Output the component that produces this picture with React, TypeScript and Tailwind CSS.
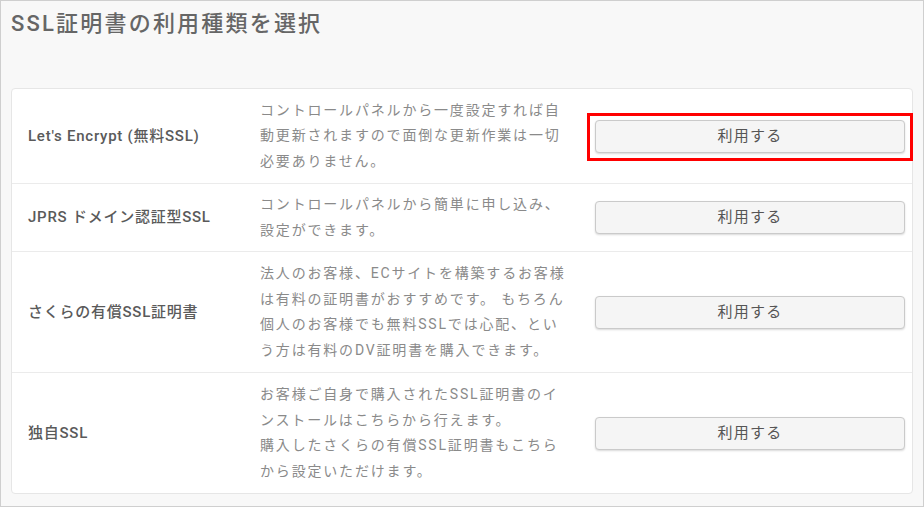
const font = { fontFamily: 'Roboto, "Noto Sans CJK JP", sans-serif' };

const rows = [
  {
    label: "Let's Encrypt (無料SSL)",
    lines: ['コントロールパネルから一度設定すれば自', '動更新されますので面倒な更新作業は一切', '必要ありません。'],
    height: 'h-[94px]',
    marked: true,
  },
  {
    label: 'JPRS ドメイン認証型SSL',
    lines: ['コントロールパネルから簡単に申し込み、', '設定ができます。'],
    height: 'h-[68px]',
  },
  {
    label: 'さくらの有償SSL証明書',
    lines: ['法人のお客様、ECサイトを構築するお客様', 'は有料の証明書がおすすめです。 もちろん', '個人のお客様でも無料SSLでは心配、とい', 'う方は有料のDV証明書を購入できます。'],
    height: 'h-[121px]',
  },
  {
    label: '独自SSL',
    lines: ['お客様ご自身で購入されたSSL証明書のイ', 'ンストールはこちらから行えます。', '購入したさくらの有償SSL証明書もこちら', 'から設定いただけます。'],
    height: 'h-[121px]',
  },
];

export default function App() {
  return (
    <div className="h-[507px] w-[924px] overflow-hidden border border-[#cfcfcf] bg-[#f8f8f8] px-[10px] pt-[8px]" style={font}>
      <h1 className="text-[22px] leading-[30px] font-medium tracking-[0.1em] text-[#666]">SSL証明書の利用種類を選択</h1>

      <div className="mt-[49px] rounded-[4px] border border-[#e6e6e6] bg-white">
        {rows.map((row, i) => (
          <div
            key={row.label}
            className={`flex items-center ${row.height} ${i > 0 ? 'border-t border-[#ebebeb]' : ''}`}
          >
            <div className="w-[248px] shrink-0 pl-[16px] text-[15px] font-medium tracking-[0.05em] text-[#5a5a5a]">{row.label}</div>
            <div className="w-[335px] shrink-0 text-[14px] leading-[25.5px] tracking-[0.13em] whitespace-nowrap text-[#8a8a8a]">
              {row.lines.map((l) => (
                <div key={l}>{l}</div>
              ))}
            </div>
            <div className="relative">
              <button className="h-[33px] w-[310px] rounded-[4px] border border-[#cacaca] bg-[#f5f5f5] text-[15px] tracking-[0.08em] text-[#555] shadow-[0_1px_2px_rgba(0,0,0,0.15)]">
                利用する
              </button>
              {row.marked && (
                <div className="pointer-events-none absolute -top-[7px] -bottom-[8px] -left-[8px] -right-[8px] border-[3px] border-[#ff0000]" />
              )}
            </div>
          </div>
        ))}
      </div>
    </div>
  );
}
